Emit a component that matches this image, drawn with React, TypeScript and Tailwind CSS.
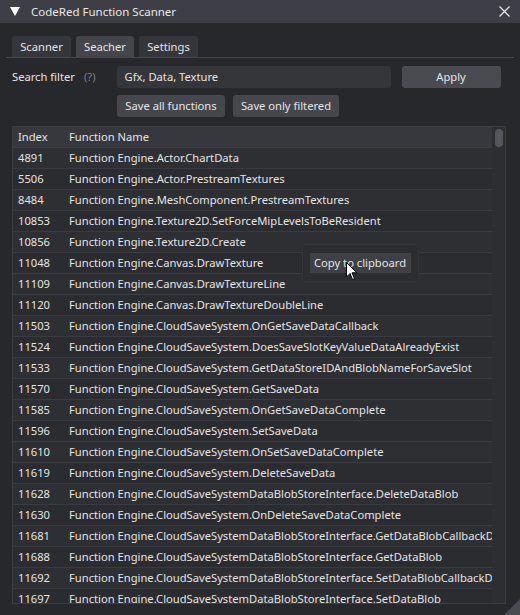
import React from "react";

const rows: [string, string][] = [
  ["4891", "Function Engine.Actor.ChartData"],
  ["5506", "Function Engine.Actor.PrestreamTextures"],
  ["8484", "Function Engine.MeshComponent.PrestreamTextures"],
  ["10853", "Function Engine.Texture2D.SetForceMipLevelsToBeResident"],
  ["10856", "Function Engine.Texture2D.Create"],
  ["11048", "Function Engine.Canvas.DrawTexture"],
  ["11109", "Function Engine.Canvas.DrawTextureLine"],
  ["11120", "Function Engine.Canvas.DrawTextureDoubleLine"],
  ["11503", "Function Engine.CloudSaveSystem.OnGetSaveDataCallback"],
  ["11524", "Function Engine.CloudSaveSystem.DoesSaveSlotKeyValueDataAlreadyExist"],
  ["11533", "Function Engine.CloudSaveSystem.GetDataStoreIDAndBlobNameForSaveSlot"],
  ["11570", "Function Engine.CloudSaveSystem.GetSaveData"],
  ["11585", "Function Engine.CloudSaveSystem.OnGetSaveDataComplete"],
  ["11596", "Function Engine.CloudSaveSystem.SetSaveData"],
  ["11610", "Function Engine.CloudSaveSystem.OnSetSaveDataComplete"],
  ["11619", "Function Engine.CloudSaveSystem.DeleteSaveData"],
  ["11628", "Function Engine.CloudSaveSystemDataBlobStoreInterface.DeleteDataBlob"],
  ["11630", "Function Engine.CloudSaveSystem.OnDeleteSaveDataComplete"],
  ["11681", "Function Engine.CloudSaveSystemDataBlobStoreInterface.GetDataBlobCallbackDelegate"],
  ["11688", "Function Engine.CloudSaveSystemDataBlobStoreInterface.GetDataBlob"],
  ["11692", "Function Engine.CloudSaveSystemDataBlobStoreInterface.SetDataBlobCallbackDelegate"],
  ["11697", "Function Engine.CloudSaveSystemDataBlobStoreInterface.SetDataBlob"],
];

export default function App() {
  return (
    <div
      className="relative w-[520px] h-[615px] overflow-hidden bg-[#27282c] text-[#e4e4e4] text-[11.2px] leading-none whitespace-nowrap"
      style={{ fontFamily: '"Noto Sans", "Open Sans", sans-serif' }}
    >
      {/* Title bar */}
      <div className="h-[23px] bg-[#3e3f46] flex items-center">
        <svg width="10" height="9" viewBox="0 0 10 9" className="ml-[10px]">
          <polygon points="0,0 10,0 5,9" fill="#ffffff" />
        </svg>
        <span className="ml-[11px] text-[#e8e8e8] text-[11.5px]">CodeRed Function Scanner</span>
        <svg width="11" height="11" viewBox="0 0 11 11" className="ml-auto mr-[10px]">
          <path d="M0.5 0.5 L10.5 10.5 M10.5 0.5 L0.5 10.5" stroke="#e6e6e6" strokeWidth="1.3" />
        </svg>
      </div>

      <div className="px-[12px] flex flex-col">
        {/* Tabs */}
        <div className="flex gap-[5px] mt-[13px] h-[21px]">
          <div className="w-[59px] h-full bg-[#35363b] rounded-t-[3px] flex items-center justify-center">Scanner</div>
          <div className="w-[58px] h-full bg-[#45464c] rounded-t-[3px] flex items-center justify-center">Seacher</div>
          <div className="w-[59px] h-full bg-[#35363b] rounded-t-[3px] flex items-center justify-center">Settings</div>
        </div>
        <div className="-mx-[6px] h-px bg-[#45464c]" />

        {/* Search row */}
        <div className="flex items-center mt-[8px] h-[22px]">
          <span className="w-[72px]">Search filter</span>
          <span className="text-[#7d7e84]">(?)</span>
          <div className="ml-[21px] w-[274px] h-full bg-[#35363a] rounded-[3px] flex items-center pl-[8px]">
            Gfx, Data, Texture
          </div>
          <div className="ml-[11px] w-[99px] h-full bg-[#4a4b51] rounded-[3px] flex items-center justify-center">
            Apply
          </div>
        </div>

        {/* Save buttons */}
        <div className="flex mt-[7px] h-[22px] pl-[105px] gap-[8px]">
          <div className="w-[108px] h-full bg-[#46474c] rounded-[3px] flex items-center justify-center">
            Save all functions
          </div>
          <div className="w-[106px] h-full bg-[#46474c] rounded-[3px] flex items-center justify-center">
            Save only filtered
          </div>
        </div>

        {/* Table */}
        <div className="mt-[9px] w-[494px] h-[478px] border border-[#3c3d42] flex overflow-hidden">
          <div className="flex-1 min-w-0 flex flex-col overflow-hidden">
            <div className="h-[21px] shrink-0 bg-[#37383d] flex items-center border-b border-[#3c3d42]">
              <span className="w-[56px] pl-[5px]">Index</span>
              <span>Function Name</span>
            </div>
            {rows.map(([i, n], k) => (
              <div
                key={i}
                className={`h-[21px] shrink-0 flex items-center border-b border-[#3a3b40] ${
                  k % 2 === 0 ? "bg-[#2e2f33]" : "bg-[#2b2c30]"
                }`}
              >
                <span className="w-[56px] shrink-0 pl-[5px]">{i}</span>
                <span>{n}</span>
              </div>
            ))}
          </div>
          <div className="w-[13px] shrink-0 bg-[#2d2e32] flex justify-center pt-[2px]">
            <div className="w-[8px] h-[18px] bg-[#55565c] rounded-[4px]" />
          </div>
        </div>
      </div>

      {/* Context popup */}
      <div className="absolute left-[302px] top-[244px] w-[117px] h-[38px] bg-[#2c2d31] rounded-[3px] border border-[#333438] flex items-center justify-center">
        <div className="w-[101px] h-[20px] bg-[#3f4045] flex items-center pl-[4px]">Copy to clipboard</div>
      </div>

      {/* Mouse cursor */}
      <svg className="absolute left-[346px] top-[262px]" width="12" height="19" viewBox="0 0 12 19">
        <path d="M0.5 0.5 L0.5 15 L4 11.5 L6.5 17.5 L8.5 16.5 L6 10.8 L11 10.8 Z" fill="#ffffff" stroke="#000000" strokeWidth="1" />
      </svg>

      {/* Resize grip */}
      <svg className="absolute right-0 bottom-0" width="16" height="16" viewBox="0 0 16 16">
        <polygon points="16,0 16,16 0,16" fill="#4a4b50" />
      </svg>
    </div>
  );
}
